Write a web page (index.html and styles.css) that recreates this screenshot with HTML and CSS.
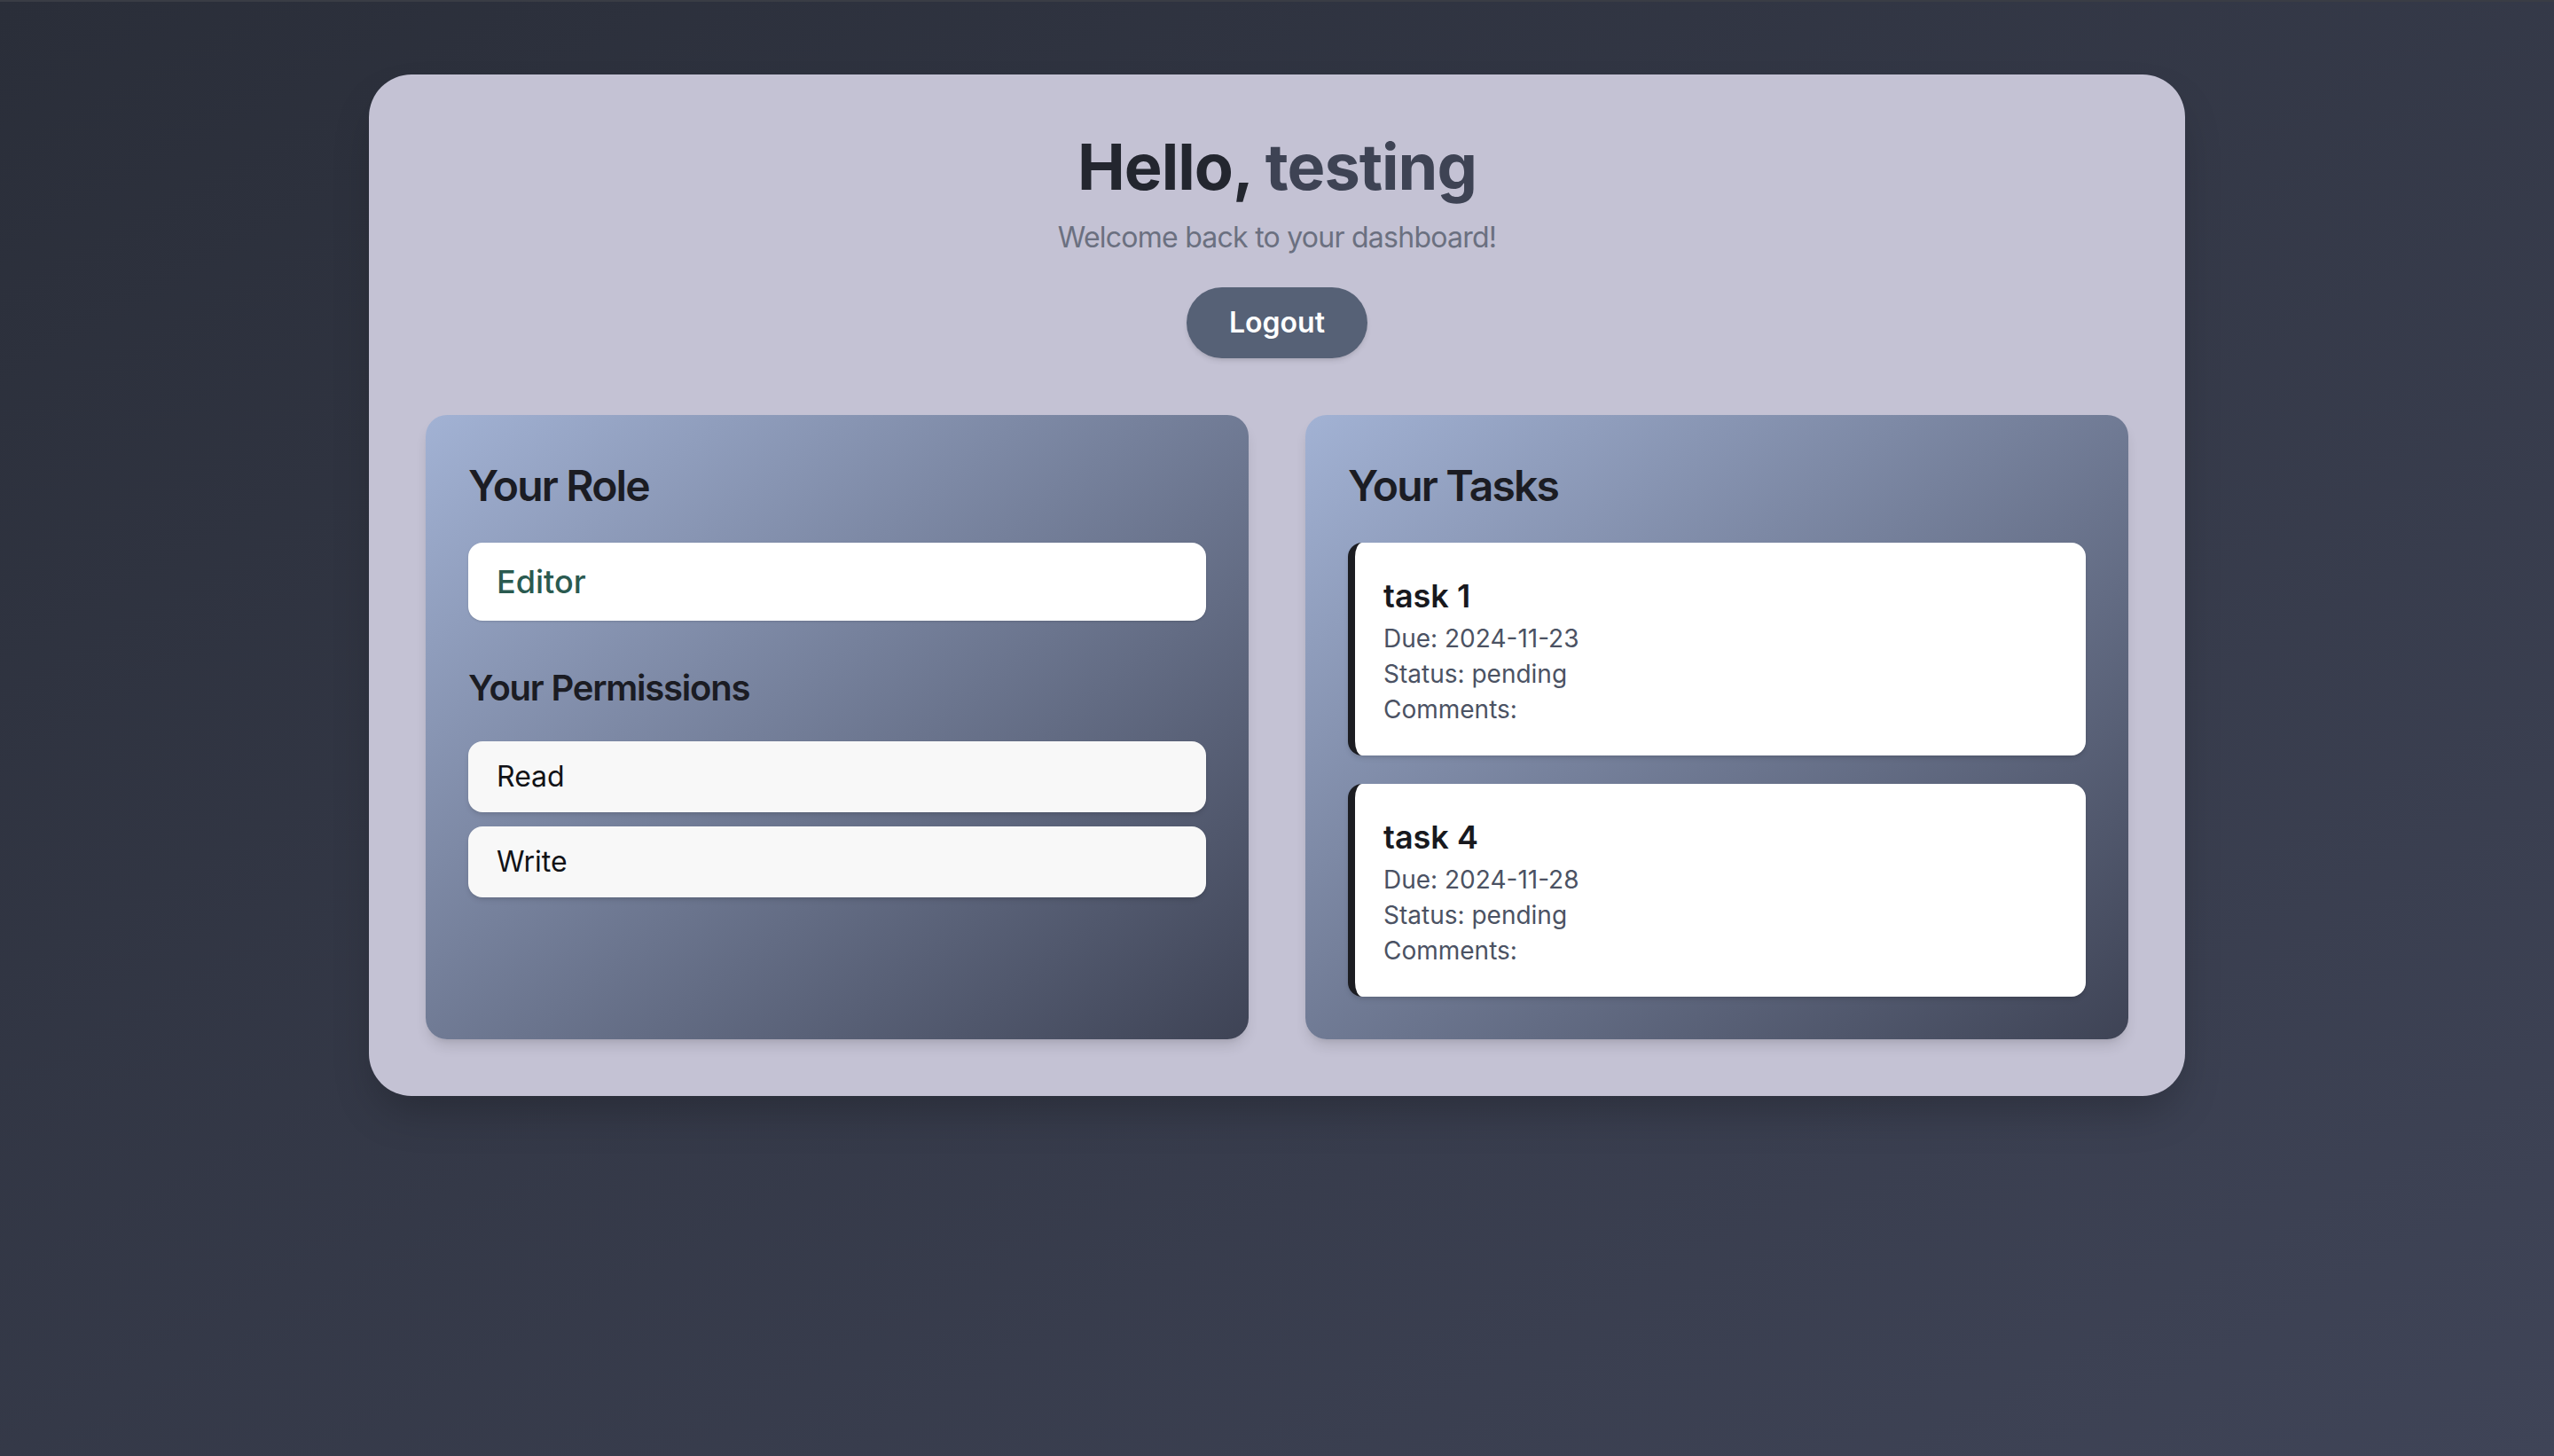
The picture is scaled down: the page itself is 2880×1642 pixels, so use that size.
FILE: index.html
```html
<!DOCTYPE html>
<html lang="en">
<head>
<meta charset="utf-8">
<title>Dashboard</title>
<link rel="stylesheet" href="styles.css">
</head>
<body>
<main class="card">
  <header class="hero">
    <h1 class="hero-title">Hello, <span class="hero-name">testing</span></h1>
    <p class="hero-sub">Welcome back to your dashboard!</p>
    <button class="logout">Logout</button>
  </header>
  <div class="grid">
    <section class="panel">
      <h2 class="panel-title">Your Role</h2>
      <div class="role-box">Editor</div>
      <h3 class="sub-title">Your Permissions</h3>
      <ul class="perm-list">
        <li class="perm">Read</li>
        <li class="perm">Write</li>
      </ul>
    </section>
    <section class="panel">
      <h2 class="panel-title">Your Tasks</h2>
      <div class="task-list">
        <article class="task">
          <h4 class="task-title">task 1</h4>
          <p class="task-line">Due: 2024-11-23</p>
          <p class="task-line">Status: pending</p>
          <p class="task-line">Comments: </p>
        </article>
        <article class="task">
          <h4 class="task-title">task 4</h4>
          <p class="task-line">Due: 2024-11-28</p>
          <p class="task-line">Status: pending</p>
          <p class="task-line">Comments: </p>
        </article>
      </div>
    </section>
  </div>
</main>
</body>
</html>
```
FILE: styles.css
```css
* { box-sizing: border-box; }
html, body { margin: 0; padding: 0; }
body {
  min-height: 100vh;
  font-family: Inter, "Noto Sans", "Liberation Sans", sans-serif;
  background: linear-gradient(to bottom right, #2a2e39, #3f4457);
  border-top: 2px solid #3a3d45;
  padding: 82px 0 80px;
}
.card {
  width: 2048px;
  margin: 0 auto;
  background: #c4c2d4;
  border-radius: 48px;
  padding: 64px;
  box-shadow: 0 25px 50px -12px rgba(0,0,0,0.25);
}
.hero {
  display: flex;
  flex-direction: column;
  align-items: center;
  text-align: center;
}
.hero-title {
  margin: 0;
  font-size: 72px;
  line-height: 80px;
  font-weight: 700;
  color: #23262f;
  letter-spacing: -1px;
}
.hero-name { color: #3e4354; }
.hero-sub {
  margin: 16px 0 0;
  font-size: 32px;
  line-height: 48px;
  color: #6b7080;
  letter-spacing: -0.75px;
}
.logout {
  margin-top: 32px;
  font-family: inherit;
  font-size: 32px;
  line-height: 48px;
  font-weight: 600;
  color: #fff;
  background: #566176;
  border: 0;
  border-radius: 9999px;
  padding: 16px 48px;
  box-shadow: 0 4px 6px -1px rgba(0,0,0,0.1), 0 2px 4px -2px rgba(0,0,0,0.1);
}
.grid {
  margin-top: 64px;
  display: grid;
  grid-template-columns: 1fr 1fr;
  gap: 64px;
}
.panel {
  border-radius: 24px;
  padding: 48px;
  background: linear-gradient(to bottom right, #a2b2d4, #3e4355);
  box-shadow: 0 10px 15px -3px rgba(0,0,0,0.12), 0 4px 6px -4px rgba(0,0,0,0.1);
}
.panel-title {
  margin: 0 0 32px;
  font-size: 48px;
  line-height: 64px;
  font-weight: 600;
  color: #1b1c23;
  letter-spacing: -1.8px;
}
.role-box {
  background: #fff;
  border-radius: 16px;
  padding: 16px 32px;
  font-size: 36px;
  line-height: 56px;
  font-weight: 500;
  color: #2a5a50;
  box-shadow: 0 1px 3px rgba(0,0,0,0.1), 0 1px 2px -1px rgba(0,0,0,0.1);
}
.sub-title {
  margin: 48px 0 32px;
  font-size: 40px;
  line-height: 56px;
  font-weight: 600;
  color: #1b1c23;
  letter-spacing: -1.2px;
}
.perm-list {
  list-style: none;
  margin: 0;
  padding: 0;
  display: flex;
  flex-direction: column;
  gap: 16px;
}
.perm {
  background: #f8f8f8;
  border-radius: 16px;
  padding: 16px 32px;
  font-size: 32px;
  line-height: 48px;
  color: #111216;
  box-shadow: 0 4px 6px -1px rgba(0,0,0,0.1), 0 2px 4px -2px rgba(0,0,0,0.1);
}
.task-list {
  display: flex;
  flex-direction: column;
  gap: 32px;
}
.task {
  background: #fff;
  border-left: 8px solid #1c1d22;
  border-radius: 16px;
  padding: 32px;
  box-shadow: 0 4px 6px -1px rgba(0,0,0,0.1), 0 2px 4px -2px rgba(0,0,0,0.1);
}
.task-title {
  margin: 0;
  font-size: 36px;
  line-height: 56px;
  font-weight: 600;
  color: #18191e;
}
.task-line {
  margin: 0;
  font-size: 28px;
  line-height: 40px;
  color: #4b5263;
}
```
